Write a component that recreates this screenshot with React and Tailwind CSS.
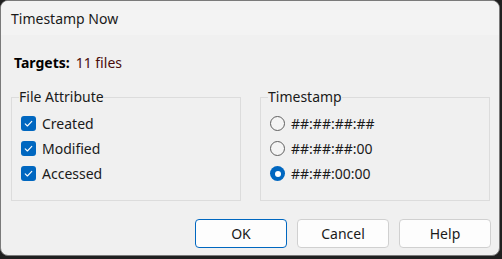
import React from "react";

const font = { fontFamily: '"Noto Sans", "Liberation Sans", sans-serif' };

function Check({ label }) {
  return (
    <div className="flex h-[25px] items-center">
      <span className="ml-[2px] flex h-[15px] w-[15px] items-center justify-center rounded-[3px] bg-[#0067c0]">
        <svg width="15" height="15" viewBox="0 0 15 15">
          <path d="M4.2 7.8 L6.4 10 L10.8 5.4" fill="none" stroke="white" strokeWidth="1.1" strokeLinecap="round" strokeLinejoin="round" />
        </svg>
      </span>
      <span className="ml-[6px] text-[14px] text-[#1a1a1a]">{label}</span>
    </div>
  );
}

function Radio({ label, checked }) {
  return (
    <div className="flex h-[25px] items-center">
      <span
        className={
          checked
            ? "ml-[2px] flex h-[15px] w-[15px] items-center justify-center rounded-full bg-[#0067c0]"
            : "ml-[2px] flex h-[15px] w-[15px] items-center justify-center rounded-full border border-[#5f5f5f] bg-[#f4f4f4]"
        }
      >
        {checked && <span className="h-[6px] w-[6px] rounded-full bg-white" />}
      </span>
      <span className="ml-[6px] text-[14px] text-[#1a1a1a]">{label}</span>
    </div>
  );
}

function Group({ title, children }) {
  return (
    <fieldset className="border border-[#dcdcdc] px-[7px] pt-[4px] pb-[14px]">
      <legend className="px-0 text-[14px] leading-[20px] text-[#1a1a1a]">{title}</legend>
      {children}
    </fieldset>
  );
}

function Btn({ children, primary }) {
  return (
    <button
      className={
        primary
          ? "flex h-[29px] w-[92px] items-center justify-center rounded-[4px] border border-[#0067c0] bg-[#fdfdfd] text-[14px] text-[#1a1a1a]"
          : "flex h-[29px] w-[92px] items-center justify-center rounded-[4px] border border-[#d0d0d0] bg-[#fdfdfd] text-[14px] text-[#1a1a1a]"
      }
    >
      {children}
    </button>
  );
}

export default function App() {
  return (
    <div className="h-[259px] w-[502px] bg-[#202020]" style={font}>
      <div className="flex h-[256px] w-[500px] flex-col overflow-hidden rounded-[8px] border border-[#7a7a7a] bg-[#f0f0f0]">
        <div className="flex h-[34px] items-center bg-[#f3f3f3] pl-[10px] text-[14px] text-[#1a1a1a]">
          Timestamp Now
        </div>
        <div className="flex flex-1 flex-col pl-[10px] pr-[9px]">
          <div className="mt-[17px] flex h-[20px] items-center pl-[3px] text-[14px]">
            <span className="font-bold text-[#000]">Targets:</span>
            <span className="ml-[6px] text-[#4a0b0b]">11 files</span>
          </div>
          <div className="mt-[15px] grid grid-cols-2 gap-[19px]">
            <Group title="File Attribute">
              <Check label="Created" />
              <Check label="Modified" />
              <Check label="Accessed" />
            </Group>
            <Group title="Timestamp">
              <Radio label="##:##:##:##" />
              <Radio label="##:##:##:00" />
              <Radio label="##:##:00:00" checked />
            </Group>
          </div>
          <div className="mt-auto mb-[7px] -mr-[1px] flex justify-end gap-[10px]">
            <Btn primary>OK</Btn>
            <Btn>Cancel</Btn>
            <Btn>Help</Btn>
          </div>
        </div>
      </div>
    </div>
  );
}
